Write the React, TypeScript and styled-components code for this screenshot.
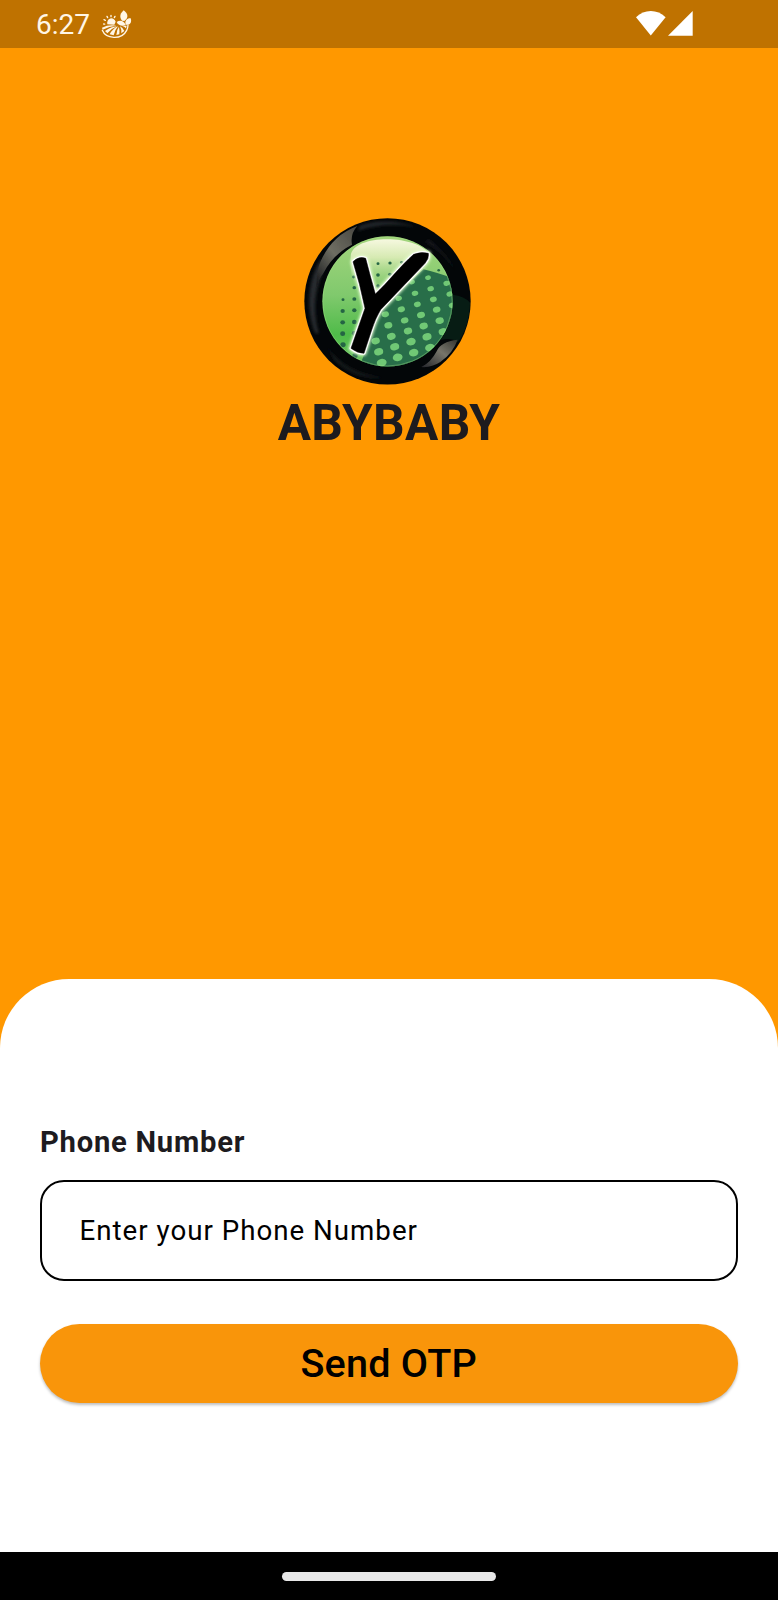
import React from 'react';
import styled, { createGlobalStyle } from 'styled-components';

const GlobalStyle = createGlobalStyle`
  *, *::before, *::after { box-sizing: border-box; }
  body { margin: 0; background: #ff9800; font-family: Roboto, "Liberation Sans", sans-serif; }
`;

const Screen = styled.div`
  width: 778px;
  height: 1600px;
  display: flex;
  flex-direction: column;
  overflow: hidden;
  background: #ff9800;
`;

const StatusBar = styled.header`
  height: 47.5px;
  flex: none;
  display: flex;
  align-items: flex-start;
  justify-content: space-between;
  padding: 9px 85px 0 36px;
  background: #bf7200;
`;

const StatusGroup = styled.div`
  display: flex;
  gap: 10px;
`;

const Clock = styled.span`
  width: 54px;
  font-size: 28px;
  line-height: 32px;
  color: #fff6e6;
  white-space: nowrap;
`;

const SignalGroup = styled.div`
  display: flex;
  gap: 2px;
  padding-top: 2px;
`;

const Brand = styled.section`
  flex: 1;
  display: flex;
  flex-direction: column;
  align-items: center;
  padding-top: 170.5px;

  > svg { margin-right: 3px; }
`;

const BrandName = styled.h1`
  margin: 8px 0 0;
  font-size: 49.5px;
  line-height: 58px;
  font-weight: 700;
  letter-spacing: 0.4px;
  color: #1d1b1e;
`;

const Sheet = styled.form`
  height: 573px;
  flex: none;
  display: flex;
  flex-direction: column;
  padding: 145px 40px 0 39.5px;
  border-radius: 69px 69px 0 0;
  background: #fff;
`;

const Label = styled.label`
  font-size: 29.2px;
  line-height: 36px;
  font-weight: 700;
  letter-spacing: 0.75px;
  padding-left: 0.5px;
  color: #1d1b20;
`;

const PhoneInput = styled.input`
  height: 101px;
  margin: 20px 0 43px;
  padding: 0 38px;
  border: 2px solid #000;
  border-radius: 24px;
  outline: none;
  background: transparent;
  font-family: inherit;
  font-size: 27.7px;
  letter-spacing: 1px;
  color: #000;

  &::placeholder { color: #000; opacity: 1; }
`;

const SubmitButton = styled.button`
  height: 79px;
  padding: 0;
  border: 0;
  border-radius: 40px;
  background: #f9950a;
  box-shadow: 0 2px 3px rgba(0, 0, 0, 0.26);
  font-family: inherit;
  font-size: 39.6px;
  line-height: 46px;
  font-weight: 500;
  letter-spacing: 0.2px;
  color: #000;
`;

const NavBar = styled.footer`
  height: 48px;
  flex: none;
  display: flex;
  justify-content: center;
  padding: 20px 1px 0 0;
  background: #000;
`;

const HomeHandle = styled.div`
  width: 214px;
  height: 8.5px;
  border-radius: 5px;
  background: #e8e8e8;
`;

const FarmIcon = () => (
  <svg width="32" height="31" viewBox="300 27 96 93" fill="none" stroke="#fff6e6" strokeLinecap="round">
    <path d="M322 73a13 14 0 0 1 25-8l-4 9Z" fill="#fff6e6" stroke="none" />
    <path d="M311 72l3 .5M312 59l4 2M321 49l2 4M333 46v4M345 49l-2 4" strokeWidth="4" />
    <path d="M366 62C355 48 364 38 371 31C386 42 385 55 373 63Z" fill="#fff6e6" stroke="none" />
    <path d="M350 66C361 59 371 63 377 75C367 80 355 77 350 66Z" fill="#fff6e6" stroke="none" />
    <path d="M377 74C373 62 382 54 392 55C396 66 391 77 377 74Z" fill="#fff6e6" stroke="none" />
    <path d="M307 91C317 117 365 121 380 91Q384 83 384 75" strokeWidth="4" />
    <path d="M306 83Q326 73 349 77Q328 78 308 89Z" fill="#fff6e6" stroke="none" />
    <path d="M315 93Q334 80 351 79Q333 86 322 100Z" fill="#fff6e6" stroke="none" />
    <path d="M329 103Q338 86 354 79Q345 89 341 106Z" fill="#fff6e6" stroke="none" />
    <path d="M349 105Q350 89 357 80Q359 91 358 103Z" fill="#fff6e6" stroke="none" />
    <path d="M364 100Q365 88 360 79Q371 85 373 93Z" fill="#fff6e6" stroke="none" />
    <path d="M366 77Q375 81 378 85L380 77Z" fill="#fff6e6" stroke="none" />
  </svg>
);

const WifiIcon = () => (
  <svg width="30" height="25" viewBox="0 0 30 25">
    <path d="M0 6.3Q6.5 0 14.8 0T29.6 6.3L14.8 24.5Z" fill="#fff" />
  </svg>
);

const CellIcon = () => (
  <svg width="25" height="25" viewBox="0 0 25 25">
    <path d="M24.7 0V24.7H0Z" fill="#fff" />
  </svg>
);

type Dot = [x: number, y: number, size: number];

const darkDots: Dot[] = [
  [250, 161, 4.5], [286, 159, 5], [321, 157, 4.5],
  [250, 195, 5.5], [286, 193, 5.5], [250, 228, 5.5],
  [177, 201, 4.5], [179, 233, 5.5], [179, 267, 6], [179, 301, 6.5], [179, 336, 7], [179, 370, 7.5], [181, 404, 8], [181, 437, 8],
  [145, 269, 4.5], [144, 303, 6.5], [144, 337, 7], [144, 371, 7.5], [145, 404, 8], [432, 181, 4],
];

const lightDots: Dot[] = [
  [400, 203, 8], [352, 216, 8], [456, 220, 9], [408, 236, 9], [361, 250, 9],
  [465, 252, 9], [416, 268, 9.5], [312, 265, 9], [368, 283, 9.5], [472, 286, 9], [320, 298, 10],
  [426, 299, 10.5], [272, 313, 10], [379, 315, 11], [330, 331, 10.5], [435, 332, 11.5],
  [281, 346, 11], [387, 348, 11.5], [340, 363, 11.5], [445, 365, 12], [290, 379, 12],
  [397, 380, 12.5], [243, 393, 11.5], [349, 395, 13], [300, 410, 12.5],
  [406, 413, 13.5], [252, 425, 12.5], [357, 428, 13], [309, 442, 13.5], [261, 458, 13.5],
];

const emblem =
  'M175 155Q194 137 213 145Q226 196 242 252C278 219 319 166 357 133Q379 124 401 130Q404 145 391 160L258 299Q242 325 231 360L208 430Q188 430 169 415L211 295Q196 221 175 155Z';

const BrandLogo = () => (
  <svg width="167" height="168" viewBox="28 24 501 504" role="img" aria-label="Abybaby logo">
    <defs>
      <linearGradient id="face" x1="0" y1="0" x2="0" y2="1">
        <stop offset="0" stopColor="#a4d57d" />
        <stop offset=".45" stopColor="#80c96d" />
        <stop offset=".75" stopColor="#4fbb49" />
        <stop offset="1" stopColor="#72c568" />
      </linearGradient>
      <linearGradient id="gloss" x1="0" y1="0" x2="0" y2="1">
        <stop offset="0" stopColor="#f6f8df" />
        <stop offset=".35" stopColor="#d6eab2" />
        <stop offset="1" stopColor="#87cb70" stopOpacity="0" />
      </linearGradient>
      <linearGradient id="shineTop" x1=".9" y1="0" x2=".1" y2="1">
        <stop offset="0" stopColor="#4c4b45" />
        <stop offset=".5" stopColor="#6e6d62" />
        <stop offset="1" stopColor="#17191c" />
      </linearGradient>
      <linearGradient id="shineLow" x1="1" y1="0" x2="0" y2="1">
        <stop offset="0" stopColor="#34342f" />
        <stop offset=".45" stopColor="#77756b" />
        <stop offset="1" stopColor="#24252a" />
      </linearGradient>
      <clipPath id="faceClip"><circle cx="278.5" cy="274" r="195.5" /></clipPath>
      <filter id="soft" x="-20%" y="-20%" width="140%" height="140%"><feGaussianBlur stdDeviation="4" /></filter>
      <filter id="edge" x="-20%" y="-20%" width="140%" height="140%"><feGaussianBlur stdDeviation="2" /></filter>
    </defs>
    <circle cx="278.5" cy="274" r="249.5" fill="#030608" />
    <path d="M195 47Q280 20 362 51Q275 34 190 62Z" fill="#24272b" filter="url(#soft)" />
    <path d="M62 370C31 292 42 206 78 149L94 165C61 226 52 294 72 370Z" fill="#282a2e" filter="url(#soft)" />
    <path d="M400 88Q455 126 485 188Q450 130 394 96Z" fill="#15191c" filter="url(#soft)" />
    <path d="M78 154Q112 76 188 48Q166 72 172 104Q116 132 85 191Q70 210 66 235Q64 185 78 154Z" fill="url(#shineTop)" filter="url(#edge)" />
    <path d="M474 254Q510 258 526 278C525 326 510 372 489 397Q470 381 438 390Q477 336 474 254Z" fill="#071c14" />
    <path d="M489 389Q475 429 437 456Q409 474 380 471Q409 457 426 424Q437 395 489 389Z" fill="url(#shineLow)" filter="url(#edge)" />
    <path d="M97 408Q151 493 266 502Q180 510 118 449Z" fill="#151a1e" filter="url(#soft)" />
    <g clipPath="url(#faceClip)">
      <rect x="80" y="76" width="398" height="398" fill="url(#face)" />
      <path d="M168 140C170 68 386 73 407 141Q381 156 357 211Q290 245 253 244L181 230Q164 180 168 140Z" fill="url(#gloss)" />
      <path d="M386 178Q429 188 480 207V480H190L220 405L250 307Z" fill="#286e49" />
      {darkDots.map(([x, y, r]) => (
        <ellipse key={`${x}-${y}`} cx={x} cy={y} rx={r} ry={r * 0.93} fill="#246544" />
      ))}
      {lightDots.map(([x, y, r]) => (
        <ellipse key={`${x}-${y}`} cx={x} cy={y} rx={r * 1.1} ry={r * 0.86} transform={`rotate(-13 ${x} ${y})`} fill="#70c875" />
      ))}
      <circle cx="278.5" cy="274" r="194" fill="none" stroke="#a1df85" strokeOpacity=".4" strokeWidth="3" />
    </g>
    <g fill="#000" strokeLinejoin="round">
      <path d={emblem} stroke="#eaffd8" strokeWidth="14" filter="url(#soft)" />
      <path d={emblem} stroke="#fff" strokeWidth="9" />
      <path d={emblem} stroke="#000" strokeWidth="1.5" />
    </g>
  </svg>
);

export default function App() {
  return (
    <>
      <GlobalStyle />
      <Screen>
        <StatusBar>
          <StatusGroup>
            <Clock>6:27</Clock>
            <FarmIcon />
          </StatusGroup>
          <SignalGroup>
            <WifiIcon />
            <CellIcon />
          </SignalGroup>
        </StatusBar>
        <Brand>
          <BrandLogo />
          <BrandName>ABYBABY</BrandName>
        </Brand>
        <Sheet onSubmit={(event) => event.preventDefault()}>
          <Label htmlFor="phone">Phone Number</Label>
          <PhoneInput id="phone" type="tel" placeholder="Enter your Phone Number" />
          <SubmitButton type="submit">Send OTP</SubmitButton>
        </Sheet>
        <NavBar>
          <HomeHandle />
        </NavBar>
      </Screen>
    </>
  );
}
